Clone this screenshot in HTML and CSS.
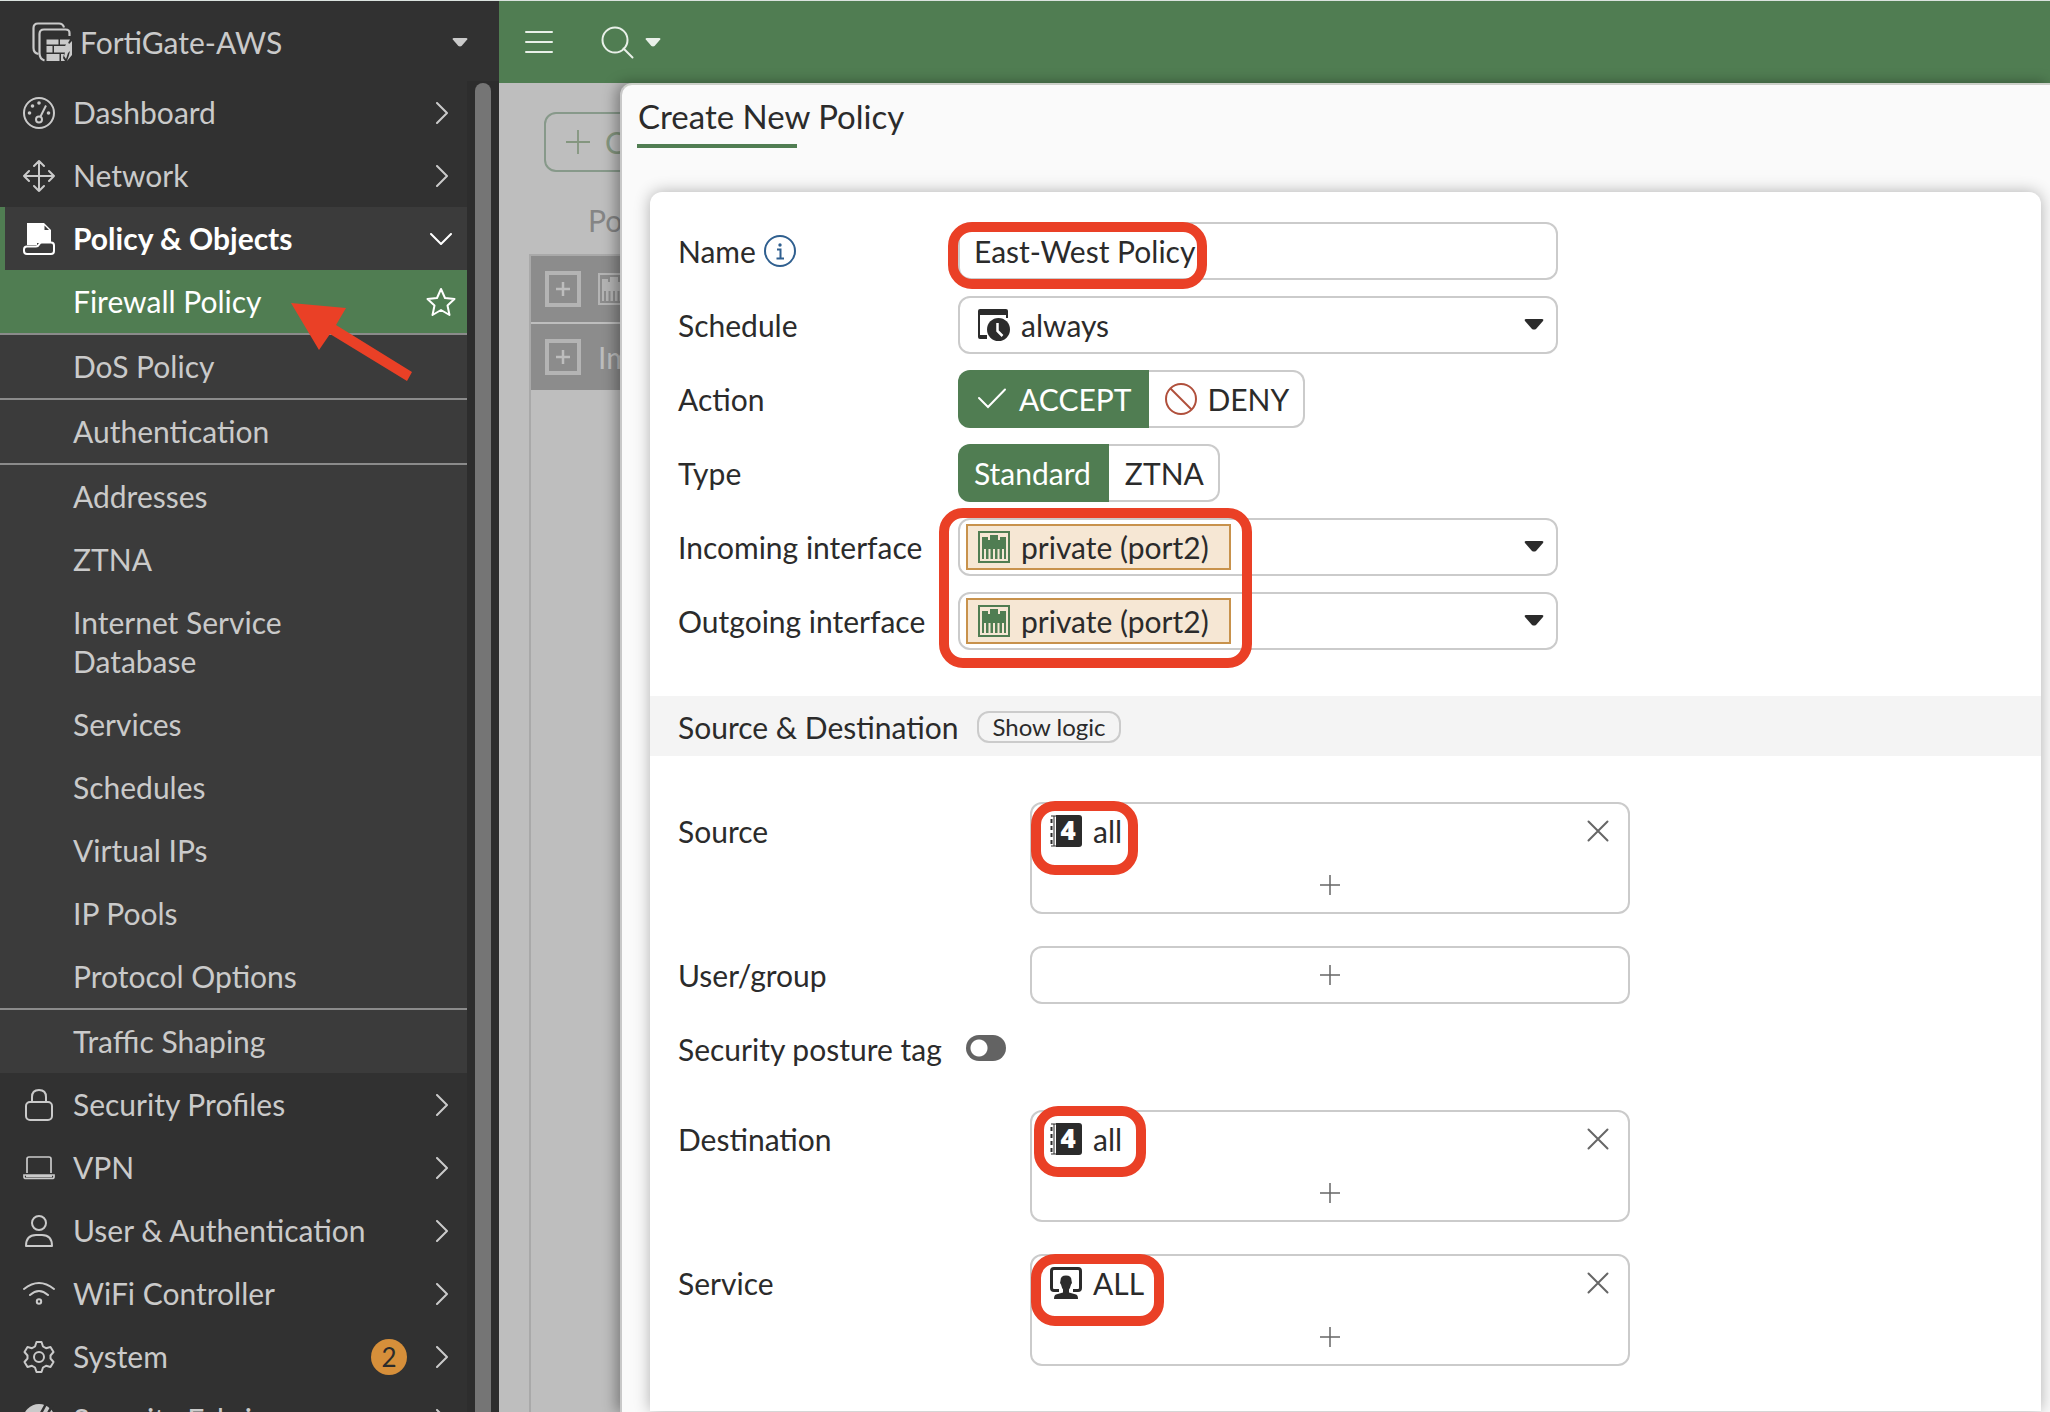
FILE: index.html
```html
<!DOCTYPE html>
<html lang="en">
<head>
<meta charset="utf-8">
<title>FortiGate-AWS - Create New Policy</title>
<link rel="stylesheet" href="styles.css">
</head>
<body>
<svg class="sprite" aria-hidden="true">
  <symbol id="chevron" viewBox="0 0 12 22"><path d="M1 1l10 10L1 21" fill="none" stroke="currentColor" stroke-width="2" stroke-linecap="round" stroke-linejoin="round"/></symbol>
  <symbol id="caret" viewBox="0 0 20 12"><path d="M2 1h16q2 0 1 2l-7 8q-2 1-4 0L1 3q-1-2 1-2z" fill="currentColor"/></symbol>
  <symbol id="plus" viewBox="0 0 20 20"><path d="M10 0v20M0 10h20" fill="none" stroke="currentColor" stroke-width="1.5"/></symbol>
  <symbol id="cross" viewBox="0 0 22 22"><path d="M1.500 1.500l19 19M20.500 1.500l-19 19" fill="none" stroke="currentColor" stroke-width="2" stroke-linecap="round"/></symbol>
  <symbol id="port" viewBox="0 0 32 32"><path d="M1 1h30v30H1z" fill="none" stroke="currentColor" stroke-width="2"/><path d="M4 6h6v3h2V4h8v5h2V6h6v22H4z" fill="currentColor"/><path d="M7 18v10M11.500 18v10M16 18v10M20.500 18v10M25 18v10" stroke="var(--port-gap)" stroke-width="2"/></symbol>
  <symbol id="address" viewBox="0 0 32 32"><path d="M6 0h23q3 0 3 3v26q0 3-3 3H6z" fill="currentColor"/><path d="M1 1h5M1 31h5M4 1v30" stroke="currentColor" stroke-width="1"/><path d="M1.500 4v4M1.500 11v4M1.500 18v4M1.500 25v4" stroke="currentColor" stroke-width="2"/></symbol>
</svg>

<div class="app">
  <nav class="sidebar" aria-label="Main menu">
    <button class="device" type="button">
      <svg class="device-icon" viewBox="0 0 40 40" aria-hidden="true">
        <g fill="none" stroke="currentColor" stroke-width="2.200">
          <path d="M32 5.500Q31 1.500 27 1.500H6Q1.500 1.500 1.500 6v20q0 5 5 6"/>
          <path d="M37.500 14v-3q0-3.500-4-3.500H12q-4.500 0-4.500 4.500v19q0 6 5 7.500"/>
        </g>
        <g fill="currentColor">
          <path d="M14.500 17.500h12v5h-12zM28 17.500h10l-3 5h-7zM14.500 24h6v6.500h-6zM22 24h11l3-4 1 2 3-3v8l-4 4-2 6-2-3 1-3.500H22zM14.500 32h13v7h-13zM29 32h3l-1 4 2 3h-4zM38 29l2-2v6l-5 6q2-5 3-10z"/>
        </g>
      </svg>
      <span class="device-name">FortiGate-AWS</span>
      <svg class="caret-sm" aria-hidden="true"><use href="#caret"/></svg>
    </button>

    <div class="menu-wrap">
      <ul class="menu">
        <li><a class="item" href="#dashboard">
          <svg class="ico" viewBox="0 0 32 32" aria-hidden="true"><g fill="none" stroke="currentColor" stroke-width="2"><circle cx="16" cy="16" r="15"/><circle cx="16" cy="22.500" r="3"/><path d="M17.500 19.500L23 8.500"/></g><g fill="currentColor"><circle cx="16" cy="6" r="1.800"/><circle cx="9.500" cy="9" r="1.800"/><circle cx="6.500" cy="16" r="1.800"/><circle cx="25.500" cy="16" r="1.800"/></g></svg>
          <span class="label">Dashboard</span><svg class="chev" aria-hidden="true"><use href="#chevron"/></svg></a></li>
        <li><a class="item" href="#network">
          <svg class="ico" viewBox="0 0 32 32" aria-hidden="true"><path d="M16 1v30M1 16h30M11 6l5-5 5 5M11 26l5 5 5-5M6 11l-5 5 5 5M26 11l5 5-5 5" fill="none" stroke="currentColor" stroke-width="2" stroke-linecap="round" stroke-linejoin="round"/></svg>
          <span class="label">Network</span><svg class="chev" aria-hidden="true"><use href="#chevron"/></svg></a></li>
        <li class="open"><a class="item current" href="#policy">
          <svg class="ico" viewBox="0 0 32 32" aria-hidden="true"><path d="M4 0h17l7 7v13H4z" fill="currentColor"/><path d="M21.500 2.500v4.500H26z" fill="#3b3b3b"/><path d="M4 23.500h9q2 0 3-2t3-2h9q3 0 3 3V28q0 3-3 3H4q-3 0-3-3v-1.500q0-3 3-3z" fill="#3b3b3b" stroke="currentColor" stroke-width="2"/><path d="M4 15h10v7H4z" fill="currentColor"/></svg>
          <span class="label">Policy &amp; Objects</span>
          <svg class="chev-down" viewBox="0 0 22 12" aria-hidden="true"><path d="M1 1l10 10L21 1" fill="none" stroke="currentColor" stroke-width="2" stroke-linecap="round" stroke-linejoin="round"/></svg></a>
          <ul class="submenu">
            <li class="ruled"><a class="item sub active" href="#firewall"><span class="label">Firewall Policy</span>
              <svg class="star" viewBox="0 0 30 30" aria-hidden="true"><path d="M15 2l4 9 9.500 1-7 6.500 2 9.500-8.500-5-8.500 5 2-9.500-7-6.500L11 11z" fill="none" stroke="currentColor" stroke-width="2" stroke-linejoin="round"/></svg></a>
              <svg class="arrow" viewBox="0 0 122 80" aria-hidden="true"><path d="M0 0l55 5-10 17 76 47-5 9-77-47-11 16z" fill="#ea4026"/></svg></li>
            <li class="ruled"><a class="item sub" href="#dos"><span class="label">DoS Policy</span></a></li>
            <li class="ruled"><a class="item sub" href="#auth"><span class="label">Authentication</span></a></li>
            <li><a class="item sub" href="#addresses"><span class="label">Addresses</span></a></li>
            <li><a class="item sub" href="#ztna"><span class="label">ZTNA</span></a></li>
            <li><a class="item sub" href="#isdb"><span class="label">Internet Service Database</span></a></li>
            <li><a class="item sub" href="#services"><span class="label">Services</span></a></li>
            <li><a class="item sub" href="#schedules"><span class="label">Schedules</span></a></li>
            <li><a class="item sub" href="#vips"><span class="label">Virtual IPs</span></a></li>
            <li><a class="item sub" href="#pools"><span class="label">IP Pools</span></a></li>
            <li class="ruled"><a class="item sub" href="#protocol"><span class="label">Protocol Options</span></a></li>
            <li><a class="item sub" href="#shaping"><span class="label">Traffic Shaping</span></a></li>
          </ul>
        </li>
        <li><a class="item" href="#security">
          <svg class="ico" viewBox="0 0 32 32" aria-hidden="true"><g fill="none" stroke="currentColor" stroke-width="2"><rect x="3" y="13" width="26" height="18" rx="4"/><path d="M9 13V8q0-7 7-7t7 7v5"/></g></svg>
          <span class="label">Security Profiles</span><svg class="chev" aria-hidden="true"><use href="#chevron"/></svg></a></li>
        <li><a class="item" href="#vpn">
          <svg class="ico" viewBox="0 0 32 32" aria-hidden="true"><g fill="none" stroke="currentColor" stroke-width="1.700"><path d="M4 21V7q0-2 2-2h20q2 0 2 2v14"/><path d="M1 23h30v2q0 1.500-2 1.500H3q-2 0-2-1.500zM3 24.500h26"/></g></svg>
          <span class="label">VPN</span><svg class="chev" aria-hidden="true"><use href="#chevron"/></svg></a></li>
        <li><a class="item" href="#users">
          <svg class="ico" viewBox="0 0 32 32" aria-hidden="true"><g fill="none" stroke="currentColor" stroke-width="2" stroke-linejoin="round"><circle cx="16" cy="8" r="7"/><path d="M3 31q0-11 10-11h6q10 0 10 11z"/></g></svg>
          <span class="label">User &amp; Authentication</span><svg class="chev" aria-hidden="true"><use href="#chevron"/></svg></a></li>
        <li><a class="item" href="#wifi">
          <svg class="ico" viewBox="0 0 32 32" aria-hidden="true"><g fill="none" stroke="currentColor" stroke-width="2" stroke-linecap="round"><path d="M1 11q15-12 30 0M7 17q9-8 18 0"/><circle cx="16" cy="23.500" r="2.200"/></g></svg>
          <span class="label">WiFi Controller</span><svg class="chev" aria-hidden="true"><use href="#chevron"/></svg></a></li>
        <li><a class="item" href="#system">
          <svg class="ico" viewBox="0 0 32 32" aria-hidden="true"><g fill="none" stroke="currentColor" stroke-width="2" stroke-linejoin="round"><circle cx="16" cy="16" r="5"/><path d="M13.500 1h5l1.500 4.500 3 1.700 4.500-1.200 3 5-3 3.500v3l3 3.500-3 5-4.500-1.200-3 1.700-1.500 4.500h-5l-1.500-4.500-3-1.700-4.500 1.200-3-5 3-3.500v-3l-3-3.500 3-5L9 7.200l3-1.700z"/></g></svg>
          <span class="label">System</span><span class="badge">2</span><svg class="chev" aria-hidden="true"><use href="#chevron"/></svg></a></li>
        <li><a class="item" href="#fabric">
          <svg class="ico" viewBox="0 0 32 32" aria-hidden="true"><circle cx="16" cy="16" r="16" fill="currentColor"/><path d="M23 0L12 20M29 2L18 22" stroke="#313131" stroke-width="2.500"/></svg>
          <span class="label">Security Fabric</span><svg class="chev" aria-hidden="true"><use href="#chevron"/></svg></a></li>
      </ul>
      <div class="scrollbar"><div class="thumb"></div></div>
    </div>
  </nav>

  <div class="main">
    <header class="topbar">
      <button class="tool" type="button" aria-label="Toggle menu"><svg width="28" height="24" viewBox="0 0 28 24" aria-hidden="true"><path d="M1 2h26M1 12h26M1 22h26" stroke="currentColor" stroke-width="2" stroke-linecap="round"/></svg></button>
      <button class="tool" type="button" aria-label="Search"><svg width="33" height="33" viewBox="0 0 33 33" aria-hidden="true"><path d="M22.500 22.500L31.500 31.500" stroke="currentColor" stroke-width="2" stroke-linecap="round"/><circle cx="14" cy="14" r="12.500" fill="none" stroke="currentColor" stroke-width="2"/></svg><svg class="caret-sm" aria-hidden="true"><use href="#caret"/></svg></button>
    </header>

    <div class="workspace">
      <div class="backdrop">
        <div class="ghost-button"><svg width="24" height="24" aria-hidden="true"><use href="#plus"/></svg><span>Create new</span></div>
        <div class="ghost-head">Policy</div>
        <div class="ghost-table">
          <div class="ghost-row"><span class="expander"><svg width="14" height="14" viewBox="0 0 14 14" aria-hidden="true"><path d="M7 0v14M0 7h14" stroke="currentColor" stroke-width="2.500"/></svg></span><svg class="port ghost-port" aria-hidden="true"><use href="#port"/></svg></div>
          <div class="ghost-row"><span class="expander"><svg width="14" height="14" viewBox="0 0 14 14" aria-hidden="true"><path d="M7 0v14M0 7h14" stroke="currentColor" stroke-width="2.500"/></svg></span><span>Implicit</span></div>
        </div>
      </div>

      <main class="panel">
        <h1 class="title">Create New Policy</h1>
        <form class="card">
          <div class="group basics">
            <div class="row">
              <label class="row-label" for="name">Name <svg class="info" viewBox="0 0 32 32" aria-hidden="true"><circle cx="16" cy="16" r="15" fill="none" stroke="currentColor" stroke-width="2"/><circle cx="16" cy="10" r="1.700" fill="currentColor"/><path d="M13 14.500h3.500V23M12.500 23.500h7.500" fill="none" stroke="currentColor" stroke-width="2"/></svg></label>
              <div class="field"><input class="text" id="name" type="text" value="East-West Policy"><span class="mark mark-name"></span></div>
            </div>
            <div class="row">
              <label class="row-label" for="schedule">Schedule</label>
              <div class="field select">
                <select id="schedule"><option>always</option></select>
                <svg class="lead" viewBox="0 0 32 32" aria-hidden="true"><path d="M2 0h26q2 0 2 2v7h-2V6H2v20h7v4H2q-2 0-2-2V2q0-2 2-2z" fill="currentColor"/><circle cx="20.500" cy="20.500" r="11.500" fill="currentColor"/><path d="M19.500 14v8l5 5" fill="none" stroke="#fff" stroke-width="2.500"/></svg>
                <svg class="caret" aria-hidden="true"><use href="#caret"/></svg>
              </div>
            </div>
            <div class="row" role="radiogroup" aria-labelledby="action-label">
              <span class="row-label" id="action-label">Action</span>
              <div class="segments">
                <label class="segment"><input type="radio" name="action" checked><svg class="check" width="32" height="32" viewBox="0 0 32 32" aria-hidden="true"><path d="M3 15l9 9L29 6.500" fill="none" stroke="currentColor" stroke-width="2" stroke-linecap="round"/></svg>ACCEPT</label>
                <label class="segment"><input type="radio" name="action"><svg class="deny" width="32" height="32" viewBox="0 0 32 32" aria-hidden="true"><g fill="none" stroke="currentColor" stroke-width="2"><circle cx="16" cy="16" r="15"/><path d="M5.500 5.500l21 21"/></g></svg>DENY</label>
              </div>
            </div>
            <div class="row" role="radiogroup" aria-labelledby="type-label">
              <span class="row-label" id="type-label">Type</span>
              <div class="segments">
                <label class="segment"><input type="radio" name="type" checked>Standard</label>
                <label class="segment"><input type="radio" name="type">ZTNA</label>
              </div>
            </div>
            <div class="row">
              <label class="row-label" for="incoming">Incoming interface</label>
              <div class="field select">
                <span class="chip"></span>
                <select id="incoming"><option>private (port2)</option></select>
                <svg class="lead port" aria-hidden="true"><use href="#port"/></svg>
                <svg class="caret" aria-hidden="true"><use href="#caret"/></svg>
                <span class="mark mark-interfaces"></span>
              </div>
            </div>
            <div class="row">
              <label class="row-label" for="outgoing">Outgoing interface</label>
              <div class="field select">
                <span class="chip"></span>
                <select id="outgoing"><option>private (port2)</option></select>
                <svg class="lead port" aria-hidden="true"><use href="#port"/></svg>
                <svg class="caret" aria-hidden="true"><use href="#caret"/></svg>
              </div>
            </div>
          </div>

          <div class="section"><h2>Source &amp; Destination</h2><button class="logic" type="button">Show logic</button></div>

          <div class="group matching">
            <div class="row">
              <span class="row-label">Source</span>
              <div class="field picker">
                <div class="entry"><svg class="entry-icon" viewBox="0 0 32 32" aria-hidden="true"><use href="#address"/><text class="four" x="18" y="25">4</text></svg><span>all</span><button class="remove" type="button" aria-label="Remove all"><svg width="22" height="22" aria-hidden="true"><use href="#cross"/></svg></button></div>
                <button class="add" type="button" aria-label="Add source"><svg width="20" height="20" aria-hidden="true"><use href="#plus"/></svg></button>
                <span class="mark mark-source"></span>
              </div>
            </div>
            <div class="row">
              <span class="row-label">User/group</span>
              <div class="field picker"><button class="add" type="button" aria-label="Add user or group"><svg width="20" height="20" aria-hidden="true"><use href="#plus"/></svg></button></div>
            </div>
            <div class="row posture">
              <label class="row-label" for="posture">Security posture tag</label>
              <input class="switch" id="posture" type="checkbox">
            </div>
            <div class="row">
              <span class="row-label">Destination</span>
              <div class="field picker">
                <div class="entry"><svg class="entry-icon" viewBox="0 0 32 32" aria-hidden="true"><use href="#address"/><text class="four" x="18" y="25">4</text></svg><span>all</span><button class="remove" type="button" aria-label="Remove all"><svg width="22" height="22" aria-hidden="true"><use href="#cross"/></svg></button></div>
                <button class="add" type="button" aria-label="Add destination"><svg width="20" height="20" aria-hidden="true"><use href="#plus"/></svg></button>
                <span class="mark mark-destination"></span>
              </div>
            </div>
            <div class="row">
              <span class="row-label">Service</span>
              <div class="field picker">
                <div class="entry"><svg class="entry-icon" viewBox="0 0 32 32" aria-hidden="true"><path d="M9 23.500H4q-2.500 0-2.500-2.500V4Q1.500 1.500 4 1.500h24q2.500 0 2.500 2.500v17q0 2.500-2.500 2.500h-5" fill="none" stroke="currentColor" stroke-width="3"/><path d="M10.500 13.500q0-5 5.500-5t5.500 5q1 2-.5 4-1 4-2 5v3l7 2q2 .5 2 4.500H4q0-4 2-4.500l7-2v-3q-1-1-2-5-1.500-2-.5-4z" fill="currentColor"/></svg><span>ALL</span><button class="remove" type="button" aria-label="Remove ALL"><svg width="22" height="22" aria-hidden="true"><use href="#cross"/></svg></button></div>
                <button class="add" type="button" aria-label="Add service"><svg width="20" height="20" aria-hidden="true"><use href="#plus"/></svg></button>
                <span class="mark mark-service"></span>
              </div>
            </div>
          </div>
        </form>
      </main>
    </div>
  </div>
</div>
</body>
</html>
```
FILE: styles.css
```css
:root {
  --green: #507d52;
  --ink: #2b2b2b;
  --line: #cbcbcb;
  --mark: #ea4026;
  --port-gap: #f6e7d4;
}

* { box-sizing: border-box; }

body {
  margin: 0;
  font: 30px/39px Lato, "Liberation Sans", sans-serif;
  color: var(--ink);
}

button, input, select { font: inherit; color: inherit; }
button { margin: 0; padding: 0; border: 0; background: none; }
ul { margin: 0; padding: 0; list-style: none; }
a { color: inherit; text-decoration: none; }
svg { display: block; flex: none; }
.sprite { position: absolute; width: 0; height: 0; }

.app {
  display: flex;
  height: 100vh;
  overflow: hidden;
  border-top: 1px solid #dbe3df;
}

/* Sidebar */
.sidebar {
  display: flex;
  flex-direction: column;
  flex: none;
  width: 499px;
  background: #313131;
  color: #cacaca;
}

.device {
  display: flex;
  align-items: center;
  flex: none;
  height: 80px;
  padding: 2px 31px 0 32px;
  text-align: left;
}
.device-icon { width: 40px; height: 40px; }
.device-name { flex: 1; margin-left: 8px; }
.caret-sm { width: 16px; height: 10px; }

.menu-wrap { display: flex; flex: 1; min-height: 0; }
.menu { flex: 1; overflow: hidden; }

.item {
  display: flex;
  align-items: center;
  min-height: 63px;
  padding: 12px 19px 12px 23px;
}
.item .label { flex: 1; margin-left: 18px; }
.ico { width: 32px; height: 32px; }
.chev { width: 12px; height: 22px; }
.chev-down { width: 22px; height: 12px; margin-right: -4px; }

.open { background: #3b3b3b; color: #fff; }
.item.current { padding-left: 18px; border-left: 5px solid var(--green); font-weight: 700; }
.submenu { color: #cacaca; }
.submenu li { position: relative; }
.ruled { border-bottom: 2px solid #8b8b8b; }
.item.sub { padding-left: 73px; padding-right: 130px; }
.item.sub .label { margin-left: 0; }
.item.sub.active { padding-right: 11px; background: var(--green); color: #fff; }
.star { width: 30px; height: 30px; }
.arrow { position: absolute; z-index: 1; left: 291px; top: 33px; width: 122px; height: 80px; }

.badge {
  width: 36px;
  margin-right: 29px;
  border-radius: 18px;
  background: #d68f3a;
  color: var(--ink);
  font-size: 26px;
  line-height: 36px;
  text-align: center;
}

.scrollbar { width: 32px; padding: 2px 8px 0; background: #2d2d2d; }
.thumb { height: 100%; border-radius: 8px 8px 0 0; background: #757575; }

/* Main column */
.main { display: flex; flex: 1; flex-direction: column; min-width: 0; }

.topbar {
  display: flex;
  align-items: center;
  gap: 48px;
  flex: none;
  height: 82px;
  padding: 0 26px;
  background: var(--green);
  color: #e9f0e9;
}
.tool { display: flex; align-items: center; gap: 11px; }

.workspace { display: flex; flex: 1; min-height: 0; background: #bebebe; }

.backdrop { flex: none; width: 121px; padding: 29px 0 0 30px; overflow: hidden; color: #858585; white-space: nowrap; }
.ghost-button {
  display: flex;
  align-items: center;
  gap: 15px;
  width: 200px;
  height: 60px;
  margin-left: 15px;
  padding-left: 20px;
  border: 2px solid #87998a;
  border-radius: 12px;
  color: #84967f;
}
.ghost-head { padding: 29px 0 14px 59px; }
.ghost-table { height: 1200px; border-left: 2px solid #a9a9a9; border-top: 2px solid #a9a9a9; }
.ghost-row {
  display: flex;
  align-items: center;
  gap: 17px;
  height: 68px;
  padding-left: 14px;
  border-bottom: 2px solid #bebebe;
  background: #8c8c8c;
  color: #bdbdbd;
}
.expander {
  display: grid;
  place-items: center;
  flex: none;
  width: 36px;
  height: 36px;
  border: 4px solid #b4b4b4;
  background: #8c8c8c;
}
.port { width: 32px; height: 32px; color: var(--green); }
.ghost-port { --port-gap: #8c8c8c; color: #b4b4b4; }

.panel {
  position: relative;
  flex: 1;
  min-width: 0;
  padding: 11px 9px 0 28px;
  border-top: 2px solid #ccd0c9;
  border-left: 2px solid #c8c8c8;
  border-radius: 12px 0 0 0;
  background: #fafafa;
  box-shadow: -4px 0 14px rgba(0, 0, 0, .35);
}

.title {
  margin: 0 0 44px -12px;
  font-size: 33px;
  font-weight: 400;
  line-height: 41px;
}
.title::after { content: ""; display: block; width: 160px; height: 4px; margin: 7px 0 0 -1px; background: var(--green); }

.card { border-radius: 12px 12px 0 0; background: #fff; box-shadow: 0 0 16px rgba(0, 0, 0, .3); }

.group { display: flex; flex-direction: column; padding-left: 28px; padding-right: 28px; }
.basics { gap: 16px; padding-top: 30px; padding-bottom: 46px; --label-width: 280px; }
.matching { gap: 32px; padding-top: 46px; padding-bottom: 45px; --label-width: 352px; }

.row { display: flex; align-items: flex-start; }
.row-label { display: flex; align-items: center; gap: 8px; flex: none; width: var(--label-width); height: 58px; }
.info { width: 32px; height: 32px; color: #2f5f8f; }

.field { position: relative; flex: 0 1 600px; min-width: 0; }
.text, .select select {
  display: block;
  width: 100%;
  height: 58px;
  padding: 0 14px;
  border: 2px solid var(--line);
  border-radius: 12px;
  background: transparent;
  outline: none;
}
.select select { position: relative; appearance: none; padding-left: 61px; }
.select .lead { position: absolute; left: 20px; top: 13px; width: 32px; height: 32px; pointer-events: none; }
.select .caret { position: absolute; right: 14px; top: 22px; width: 20px; height: 12px; pointer-events: none; }
.chip { position: absolute; left: 8px; top: 6px; width: 265px; height: 46px; border: 2px solid #c8924c; background: #f6e7d4; }

.segments { display: flex; }
.segment {
  position: relative;
  display: flex;
  align-items: center;
  gap: 10px;
  height: 58px;
  padding: 0 14px 0 16px;
  border: 2px solid var(--line);
  border-left: 0;
  border-radius: 0 12px 12px 0;
}
.segment input { position: absolute; inset: 0; margin: 0; opacity: 0; }
.segment:has(input:checked) { padding: 0 18px 0 16px; border: 0; border-radius: 12px 0 0 12px; background: var(--green); color: #fff; }
.check { margin: 0 1px 0 2px; }
.deny { color: #b0503c; }

.section { display: flex; align-items: center; gap: 19px; height: 60px; padding: 2px 28px 0; background: #f4f4f4; }
.section h2 { margin: 0; font-size: 30px; font-weight: 400; }
.logic {
  height: 32px;
  padding: 0 13px;
  border: 2px solid var(--line);
  border-radius: 12px;
  font-size: 24px;
  line-height: 28px;
}

.picker { border: 2px solid var(--line); border-radius: 12px; }
.entry { display: flex; align-items: center; gap: 11px; height: 54px; padding: 0 19px 0 18px; }
.entry-icon { width: 32px; height: 32px; }
.four { fill: #fff; font: 800 26px "Open Sans", sans-serif; text-anchor: middle; }
.remove { margin-left: auto; color: #666; }
.add { display: grid; place-items: center; width: 100%; height: 54px; color: #666; }

.posture { gap: 24px; margin-top: -16px; }
.posture .row-label { width: auto; }
.switch {
  appearance: none;
  width: 40px;
  height: 26px;
  margin: 15px 0 0;
  border-radius: 13px;
  background: radial-gradient(circle at 13px 13px, #fff 8px, #636363 9px);
}

/* Red callouts drawn over the controls */
.mark { position: absolute; z-index: 1; border: 10px solid var(--mark); border-radius: 24px; pointer-events: none; }
.mark-name { left: -10px; top: 0; width: 259px; height: 67px; }
.mark-interfaces { left: -19px; top: -10px; width: 313px; height: 160px; }
.mark-source { left: -1px; top: -3px; width: 107px; height: 74px; }
.mark-destination { left: 2px; top: -6px; width: 112px; height: 71px; }
.mark-service { left: -1px; top: -2px; width: 133px; height: 72px; }
```
